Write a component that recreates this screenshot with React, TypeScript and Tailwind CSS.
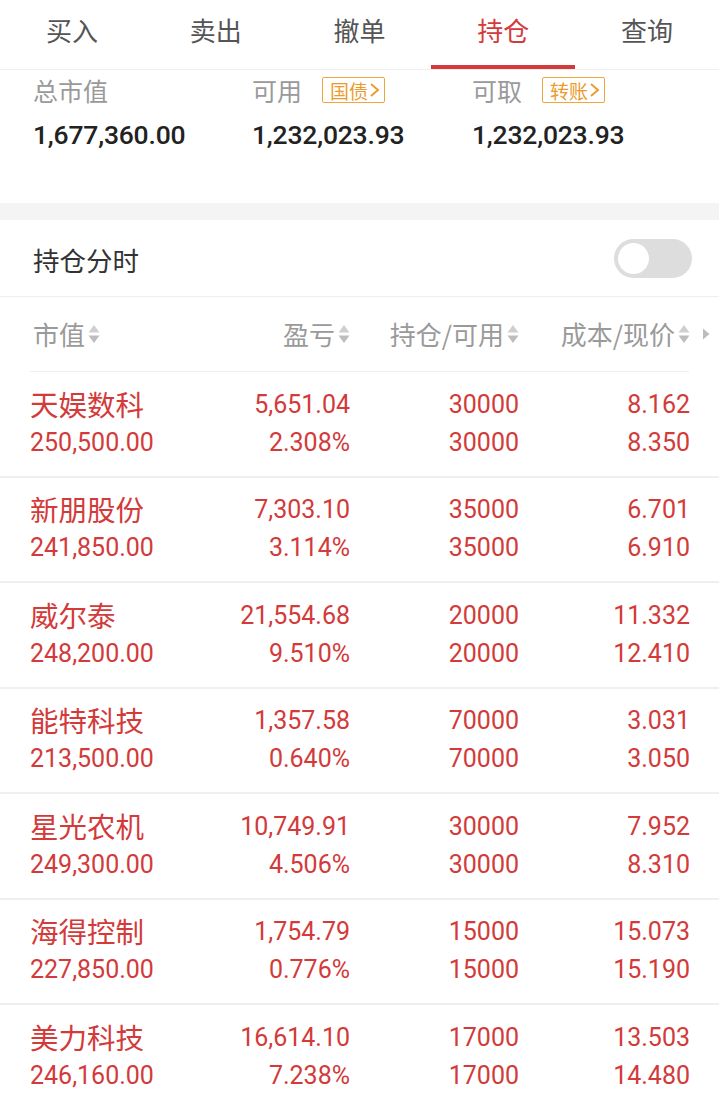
import React from "react";

const RED = "text-[#d33a3a]";

const tabs = ["买入", "卖出", "撤单", "持仓", "查询"];

const positions = [
    { name: "天娱数科", value: "250,500.00", pl: "5,651.04", pct: "2.308%", hold: "30000", avail: "30000", cost: "8.162", price: "8.350" },
    { name: "新朋股份", value: "241,850.00", pl: "7,303.10", pct: "3.114%", hold: "35000", avail: "35000", cost: "6.701", price: "6.910" },
    { name: "威尔泰", value: "248,200.00", pl: "21,554.68", pct: "9.510%", hold: "20000", avail: "20000", cost: "11.332", price: "12.410" },
    { name: "能特科技", value: "213,500.00", pl: "1,357.58", pct: "0.640%", hold: "70000", avail: "70000", cost: "3.031", price: "3.050" },
    { name: "星光农机", value: "249,300.00", pl: "10,749.91", pct: "4.506%", hold: "30000", avail: "30000", cost: "7.952", price: "8.310" },
    { name: "海得控制", value: "227,850.00", pl: "1,754.79", pct: "0.776%", hold: "15000", avail: "15000", cost: "15.073", price: "15.190" },
    { name: "美力科技", value: "246,160.00", pl: "16,614.10", pct: "7.238%", hold: "17000", avail: "17000", cost: "13.503", price: "14.480" },
];

const cjk = { fontFamily: '"Noto Sans CJK SC", "Noto Sans", sans-serif' };
const num = { fontFamily: 'Roboto, "Noto Sans CJK SC", sans-serif' };

function SortArrows() {
    return (
        <svg width="12" height="20" viewBox="0 0 12 20" className="ml-[3px]">
            <path d="M6 1 L11.5 8.5 L0.5 8.5 Z" fill="#cfcfcf" />
            <path d="M6 19 L11.5 11.5 L0.5 11.5 Z" fill="#bdbdbd" />
        </svg>
    );
}

function Badge({ label }: { label: string }) {
    return (
        <span className="ml-[20px] flex h-[26px] items-center rounded-[2px] border-[1.5px] border-[#f0a63e] pl-[7px] pr-[4px] text-[19px] leading-none text-[#eb9b2c]" style={cjk}>
            {label}
            <svg width="11" height="16" viewBox="0 0 11 16" className="ml-[1px]">
                <path d="M2 2 L9 8 L2 14" stroke="#eb9b2c" strokeWidth="1.9" fill="none" />
            </svg>
        </span>
    );
}

function Summary() {
    const items = [
        { label: "总市值", value: "1,677,360.00", badge: "" },
        { label: "可用", value: "1,232,023.93", badge: "国债" },
        { label: "可取", value: "1,232,023.93", badge: "转账" },
    ];
    return (
        <div className="grid h-[133px] grid-cols-[219px_220px_220px] pl-[33px] pt-[5px]">
            {items.map((it) => (
                <div key={it.label} className="flex flex-col gap-[15px]">
                    <div className="flex h-[30px] items-center">
                        <span className="text-[25px] leading-none text-[#9a9a9a]" style={cjk}>{it.label}</span>
                        {it.badge && <Badge label={it.badge} />}
                    </div>
                    <div className="flex h-[31px] items-center text-[26.5px] font-medium leading-none tracking-[-0.2px] text-[#222]" style={num}>
                        {it.value}
                    </div>
                </div>
            ))}
        </div>
    );
}

function Row({ p }: { p: (typeof positions)[number] }) {
    return (
        <div className={`grid h-[105.5px] grid-cols-[200px_120px_169px_171px] border-b-2 border-[#efefef] pl-[30px] pt-[14px] ${RED}`}>
            <div className="flex flex-col gap-[2px]">
                <div className="flex h-[36px] items-center text-[28.5px] leading-none" style={cjk}>{p.name}</div>
                <div className="flex h-[36px] items-center text-[25px] leading-none" style={num}>{p.value}</div>
            </div>
            <div className="flex flex-col items-end gap-[2px] text-[25px] leading-none" style={num}>
                <div className="flex h-[36px] items-center">{p.pl}</div>
                <div className="flex h-[36px] items-center">{p.pct}</div>
            </div>
            <div className="flex flex-col items-end gap-[2px] text-[25px] leading-none" style={num}>
                <div className="flex h-[36px] items-center">{p.hold}</div>
                <div className="flex h-[36px] items-center">{p.avail}</div>
            </div>
            <div className="flex flex-col items-end gap-[2px] text-[25px] leading-none" style={num}>
                <div className="flex h-[36px] items-center">{p.cost}</div>
                <div className="flex h-[36px] items-center">{p.price}</div>
            </div>
        </div>
    );
}

export default function App() {
    return (
        <div className="h-[1100px] w-[719px] overflow-hidden bg-white">
            {/* top tabs */}
            <div className="flex h-[70px] border-b border-[#eeeeee]">
                {tabs.map((t) => {
                    const active = t === "持仓";
                    return (
                        <div
                            key={t}
                            className={`flex h-[69px] flex-1 items-center justify-center text-[26px] leading-none ${active ? "border-b-4 border-[#d33a3a] pb-[5px] text-[#d33a3a]" : "pb-[9px] text-[#555]"}`}
                            style={cjk}
                        >
                            {t}
                        </div>
                    );
                })}
            </div>

            <Summary />

            <div className="h-[17px] bg-[#f4f4f4]" />

            {/* 持仓分时 */}
            <div className="flex h-[77px] items-center justify-between border-b border-[#eeeeee] pl-[33px] pr-[27px]">
                <span className="pt-[5px] text-[26.5px] leading-none text-[#333]" style={cjk}>持仓分时</span>
                <div className="flex h-[39px] w-[78px] items-center rounded-full bg-[#dddddd] pl-[4px]">
                    <div className="h-[31px] w-[31px] rounded-full bg-white" />
                </div>
            </div>

            {/* header */}
            <div className="mx-[30px] grid h-[75px] grid-cols-[200px_120px_169px_171px] items-center border-b border-[#eeeeee] text-[26px] leading-none text-[#9a9a9a]" style={cjk}>
                <div className="flex items-center pl-[3px]">市值<SortArrows /></div>
                <div className="flex items-center justify-end">盈亏<SortArrows /></div>
                <div className="flex items-center justify-end">持仓/可用<SortArrows /></div>
                <div className="relative flex items-center justify-end">
                    成本/现价<SortArrows />
                    <svg width="8" height="12" viewBox="0 0 8 12" className="absolute right-[-20px]">
                        <path d="M1 0.5 L7.5 6 L1 11.5 Z" fill="#bdbdbd" />
                    </svg>
                </div>
            </div>

            {positions.map((p) => (
                <Row key={p.name} p={p} />
            ))}
        </div>
    );
}
